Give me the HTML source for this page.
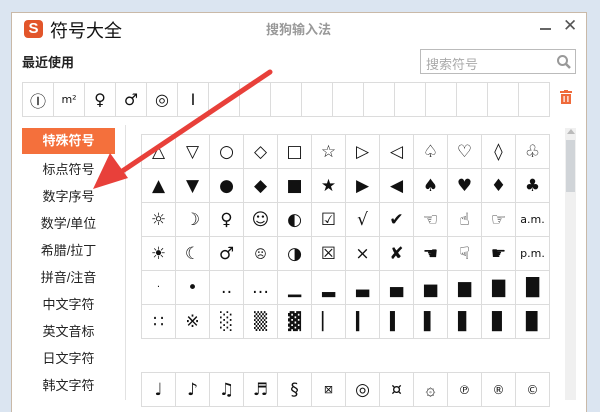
<!DOCTYPE html>
<html><head><meta charset="utf-8"><style>
*{margin:0;padding:0;box-sizing:border-box}
body{width:600px;height:400px;overflow:hidden;background:#dbe5f1;font-family:"Liberation Sans","Noto Sans CJK SC",sans-serif;position:relative}
.win{position:absolute;left:11px;top:12px;width:576px;height:400px;background:#fff;border:1px solid #c9b9a8;border-bottom:none}
.abs{position:absolute}
table{border-collapse:collapse;position:absolute}
td{border:1px solid #dcdcdc;text-align:center;vertical-align:middle;padding:0;font-family:"DejaVu Sans","Noto Sans CJK SC",sans-serif;color:#111}
.g td{width:34px;height:34px;font-size:17px}
.r td{width:31px;height:34px;font-size:16px}
.side div{position:absolute;left:22px;width:93px;text-align:center;font-size:13px;color:#222}
</style></head><body>
<div class="win"></div>
<div class="abs" style="left:24px;top:20px;width:19px;height:18px;background:#e2552a;border-radius:4px;color:#fff;font-weight:bold;font-size:15px;line-height:18px;text-align:center">S</div>
<div class="abs" style="left:50px;top:17px;font-size:18px;color:#111">符号大全</div>
<div class="abs" style="left:266px;top:19px;font-size:13px;color:#999;font-weight:bold">搜狗输入法</div>
<div class="abs" style="left:540px;top:28px;width:11px;height:2px;background:#666"></div>
<div class="abs" style="left:563px;top:16px;font-size:17px;color:#555">✕</div>
<div class="abs" style="left:22px;top:52px;font-size:13px;font-weight:bold;color:#222">最近使用</div>
<div class="abs" style="left:420px;top:49px;width:156px;height:25px;border:1px solid #bbb;font-size:13px;color:#aaa;padding:4px 5px">搜索符号</div>
<svg class="abs" style="left:556px;top:54px" width="16" height="16"><circle cx="6.5" cy="6.5" r="4.5" fill="none" stroke="#999" stroke-width="2"/><line x1="10" y1="10" x2="14" y2="14" stroke="#999" stroke-width="2.5"/></svg>
<table class="r" style="left:22px;top:82px"><tr><td>Ⓘ</td><td style="font-size:11px">m²</td><td>♀</td><td>♂</td><td>◎</td><td>I</td><td></td><td></td><td></td><td></td><td></td><td></td><td></td><td></td><td></td><td></td><td></td></tr></table>
<svg class="abs" style="left:559px;top:90px" width="14" height="15"><rect x="1" y="1" width="12" height="2" fill="#ef6a3a"/><rect x="5" y="0" width="4" height="2" fill="#ef6a3a"/><rect x="2" y="4" width="10" height="10" fill="#ef6a3a"/><rect x="4.5" y="6" width="1.2" height="6" fill="#fff"/><rect x="8.3" y="6" width="1.2" height="6" fill="#fff"/></svg>
<div class="abs" style="left:125px;top:125px;width:1px;height:275px;background:#e2e2e2"></div>
<div class="abs" style="left:22px;top:128px;width:93px;height:26px;background:#f4703c;color:#fff;font-size:13px;font-weight:bold;text-align:center;line-height:26px">特殊符号</div>
<div class="side">
<div style="top:159px">标点符号</div><div style="top:186px">数字序号</div><div style="top:213px">数学/单位</div><div style="top:240px">希腊/拉丁</div><div style="top:267px">拼音/注音</div><div style="top:294px">中文字符</div><div style="top:321px">英文音标</div><div style="top:348px">日文字符</div><div style="top:375px">韩文字符</div>
</div>
<table class="g" style="left:141px;top:134px">
<tr><td>△</td><td>▽</td><td>○</td><td>◇</td><td>□</td><td>☆</td><td>▷</td><td>◁</td><td>♤</td><td>♡</td><td>◊</td><td>♧</td></tr>
<tr><td>▲</td><td>▼</td><td>●</td><td>◆</td><td>■</td><td>★</td><td>▶</td><td>◀</td><td>♠</td><td>♥</td><td>♦</td><td>♣</td></tr>
<tr><td>☼</td><td>☽</td><td>♀</td><td>☺</td><td>◐</td><td>☑</td><td>√</td><td>✔</td><td>☜</td><td>☝</td><td>☞</td><td style="font-size:11px">a.m.</td></tr>
<tr><td>☀</td><td>☾</td><td>♂</td><td style="font-size:12px">☹</td><td>◑</td><td>☒</td><td>×</td><td>✘</td><td>☚</td><td>☟</td><td>☛</td><td style="font-size:11px">p.m.</td></tr>
<tr><td style="font-size:10px">·</td><td>•</td><td>‥</td><td>…</td><td>▁</td><td>▂</td><td>▃</td><td>▄</td><td>▅</td><td>▆</td><td>▇</td><td>█</td></tr>
<tr><td>∷</td><td>※</td><td>░</td><td>▒</td><td>▓</td><td>▏</td><td>▎</td><td>▍</td><td>▌</td><td>▋</td><td>▊</td><td>▉</td></tr>
</table>
<table class="g" style="left:141px;top:372px">
<tr><td>♩</td><td>♪</td><td>♫</td><td>♬</td><td>§</td><td style="font-size:11px">⊠</td><td>◎</td><td>¤</td><td>۞</td><td style="font-size:12px">℗</td><td style="font-size:12px">®</td><td style="font-size:12px">©</td></tr>
</table>
<div class="abs" style="left:565px;top:128px;width:11px;height:272px;background:#f0f0f0"></div>
<div class="abs" style="left:566px;top:140px;width:9px;height:52px;background:#d0d4d8"></div>
<div class="abs" style="left:566px;top:129px;width:0;height:0;border-left:4px solid transparent;border-right:4px solid transparent;border-bottom:5px solid #bbb;margin-left:1px"></div>
<svg class="abs" style="left:0;top:0" width="600" height="400"><line x1="270" y1="72" x2="112" y2="178" stroke="#e8403a" stroke-width="5" stroke-linecap="round"/><polygon points="93,189 110,153 128,178" fill="#e8403a"/></svg>
</body></html>
